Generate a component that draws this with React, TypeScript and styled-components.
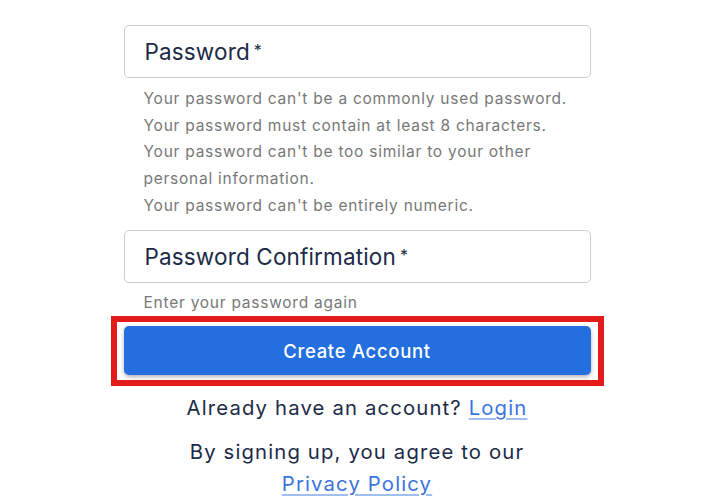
import React from "react";
import styled, { createGlobalStyle } from "styled-components";

const GlobalStyle = createGlobalStyle`
  html, body { margin: 0; padding: 0; background: #ffffff; }
  body { font-family: Inter, "Open Sans", "DejaVu Sans", sans-serif; }
`;

const Page = styled.main`
  display: flex;
  justify-content: center;
  padding-top: 25px;
`;

const Form = styled.form`
  width: 467px;
  display: flex;
  flex-direction: column;
`;

const FieldBox = styled.label`
  box-sizing: border-box;
  height: 53px;
  border: 1px solid #cfcfcf;
  border-radius: 5px;
  display: flex;
  align-items: center;
  padding: 0 19px 0 20px;
  color: #1c2a48;
  font-size: 22.5px;
  letter-spacing: 0.15px;
  cursor: text;
`;

const Star = styled.span`
  font-size: 16px;
  margin-left: 4px;
  align-self: flex-start;
  margin-top: 14px;
`;

const HelpList = styled.ul<{ $mt: number; $mb: number }>`
  list-style: none;
  margin: ${(p) => p.$mt}px 0 ${(p) => p.$mb}px;
  padding: 0 0 0 20px;
  color: #787878;
  font-size: 15.5px;
  line-height: 26.7px;
  letter-spacing: 0.75px;
`;

const Highlight = styled.div`
  margin: 0 -13px;
  border: 6px solid #e41b1b;
  padding: 4px 7px 5px;
`;

const Button = styled.button`
  width: 100%;
  height: 49px;
  border: none;
  border-radius: 5px;
  background: #246fe0;
  color: #ffffff;
  font-family: inherit;
  font-size: 18.5px;
  font-weight: 500;
  letter-spacing: 0.7px;
  box-shadow: 0 2px 4px rgba(0, 0, 0, 0.3);
  cursor: pointer;
`;

const Note = styled.p<{ $mt: number }>`
  margin: ${(p) => p.$mt}px 0 0;
  text-align: center;
  color: #1c2a48;
  font-size: 20.3px;
  line-height: 32px;
  letter-spacing: 1.15px;
`;

const Link = styled.a`
  color: #3b74e0;
  text-decoration: underline;
  text-decoration-color: #a0bff0;
  text-underline-offset: 3px;
`;

export default function App() {
  return (
    <>
      <GlobalStyle />
      <Page>
        <Form onSubmit={(e) => e.preventDefault()}>
          <FieldBox>
            Password<Star>*</Star>
          </FieldBox>
          <HelpList $mt={8} $mb={10}>
            <li>Your password can't be a commonly used password.</li>
            <li>Your password must contain at least 8 characters.</li>
            <li>Your password can't be too similar to your other personal information.</li>
            <li>Your password can't be entirely numeric.</li>
          </HelpList>
          <FieldBox>
            Password Confirmation<Star>*</Star>
          </FieldBox>
          <HelpList $mt={7} $mb={0}>
            <li>Enter your password again</li>
          </HelpList>
          <Highlight>
            <Button type="submit">Create Account</Button>
          </Highlight>
          <Note $mt={6}>
            Already have an account? <Link href="#">Login</Link>
          </Note>
          <Note $mt={12}>
            By signing up, you agree to our
            <br />
            <Link href="#">Privacy Policy</Link>
          </Note>
        </Form>
      </Page>
    </>
  );
}
